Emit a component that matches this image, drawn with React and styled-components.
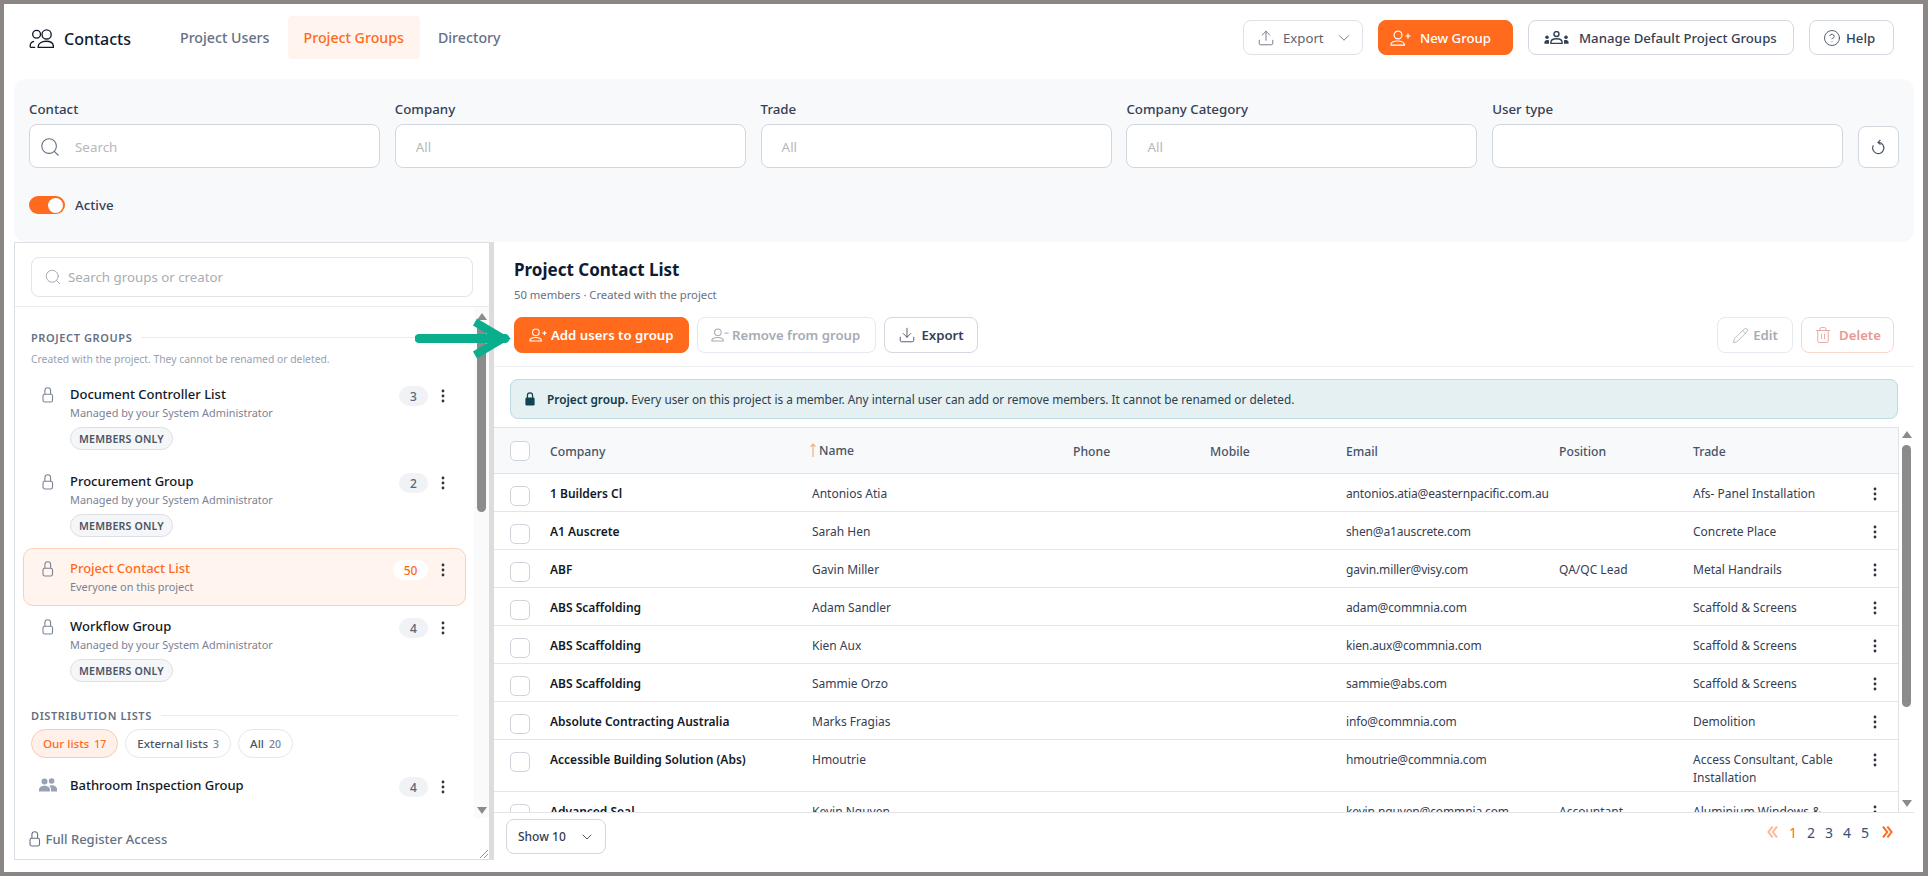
import React from "react";
import styled, { createGlobalStyle } from "styled-components";
import { Search, ChevronDown, Upload, Download, CircleHelp, Pencil, Trash2 } from "lucide-react";

const Global = createGlobalStyle`
  * { box-sizing: border-box; }
  html, body { margin: 0; padding: 0; height: 100%; overflow: hidden; }
  body { font-family: "Noto Sans", "Open Sans", sans-serif; color: #1f2937; background: #fff; }
`;

const ORANGE = "#ff6a1c";

const Frame = styled.div`
  width: 1928px; height: 876px;
  border: solid #8b8684; border-width: 4px 5px 4px 4px;
  background: #fff; display: flex; flex-direction: column; position: relative; overflow: hidden;
`;
const Header = styled.header`
  height: 75px; flex: none; display: flex; align-items: flex-start; padding: 12px 29px 0 25px;
`;
const Brand = styled.div`
  display: flex; align-items: center; gap: 10px; height: 43px; width: 135px;
  font-size: 16px; font-weight: 500; color: #0f1b33; padding-top: 2px;
`;
const Tabs = styled.nav`display: flex; gap: 2px;`;
const Tab = styled.div`
  height: 43px; padding: 0 16px; display: flex; align-items: center; font-size: 14.2px; font-weight: 500; border-radius: 4px;
  color: ${p => (p.$active ? ORANGE : "#667085")};
  background: ${p => (p.$active ? "#fff4ee" : "transparent")};
`;
const HeaderActions = styled.div`margin-left: auto; display: flex; gap: 15px; padding-top: 4px;`;
const Button = styled.button`
  font-family: inherit; height: ${p => p.$h || 35}px; width: ${p => p.$w}px; flex: none;
  padding: 0 0 0 ${p => p.$pad || 0}px;
  display: inline-flex; align-items: center; justify-content: ${p => (p.$pad ? "flex-start" : "center")}; gap: ${p => p.$gap || 7}px;
  font-size: 13.2px; font-weight: ${p => p.$weight || 500}; border-radius: 8px;
  background: ${p => (p.$primary ? ORANGE : "#fff")};
  color: ${p => p.$color || (p.$primary ? "#fff" : "#344054")};
  border: 1px solid ${p => p.$border || (p.$primary ? ORANGE : "#d3d7e0")};
`;
const FilterPanel = styled.section`
  flex: none; height: 163px; margin: 0 9px 0 10px; background: #f8f9fb; border-radius: 12px; padding: 21px 15px 0;
`;
const FilterRow = styled.div`display: flex; gap: 14.8px; align-items: flex-end;`;
const Field = styled.div`width: 351px; flex: none;`;
const FieldLabel = styled.div`font-size: 13.3px; font-weight: 500; color: #344054; line-height: 18px; margin-bottom: 6px;`;
const Input = styled.div`
  height: 44px; background: #fff; border: 1px solid #d2d6de; border-radius: 8px; display: flex; align-items: center;
  padding: 2px 0 0 ${p => (p.$icon ? 9 : 20)}px; gap: 14px; font-size: 13.4px; color: #b5b8be;
`;
const ResetButton = styled.button`
  width: 41px; height: 42px; background: #fff; border: 1px solid #d2d6de; border-radius: 8px; padding: 0;
  display: flex; align-items: center; justify-content: center; color: #475467; flex: none;
`;
const ToggleRow = styled.div`display: flex; align-items: center; gap: 10px; margin-top: 28px; font-size: 13.3px; font-weight: 500; color: #344054;`;
const Toggle = styled.div`
  width: 36px; height: 18px; border-radius: 9px; background: ${ORANGE}; display: flex; justify-content: flex-end; align-items: center; padding-right: 2px;
  &::after { content: ""; width: 15px; height: 15px; background: #fff; border-radius: 50%; }
`;
const Main = styled.main`flex: 1; min-height: 0; display: flex; padding: 0 9px 0 10px;`;

const LeftPanel = styled.aside`
  width: 480px; height: 618px; flex: none; display: flex; flex-direction: column; position: relative;
  border: 1px solid #dcdfe3; border-right: 5px solid #dcdcdc;
`;
const LeftSearchBar = styled.div`flex: none; padding: 14px 16px 9px; border-bottom: 1px solid #e9ebee;`;
const LeftSearch = styled.div`
  height: 40px; border: 1px solid #e0e3e8; border-radius: 8px; display: flex; align-items: center; gap: 6px; padding-left: 12px;
  font-size: 13.3px; color: #a9adb5;
`;
const ListArea = styled.div`flex: 1; min-height: 0; position: relative; overflow: hidden; padding: 22px 0 0 8px;`;
const SectionHead = styled.div`
  display: flex; align-items: center; gap: 9px; padding-left: 8px; width: 435px; height: 16px;
  font-size: 11px; font-weight: 600; letter-spacing: 0.6px; color: #667085; white-space: nowrap;
  &::after { content: ""; flex: 1; height: 1px; background: #e9ebee; }
  margin-top: ${p => p.$top || 0}px;
`;
const SectionNote = styled.div`font-size: 10.35px; line-height: 16px; color: #98a2b3; margin: 6px 0 7px 8px;`;
const Item = styled.div`
  width: 443px; display: flex; align-items: flex-start; padding: 9px 14px 10px 0; border-radius: 10px;
  border: 1px solid ${p => (p.$active ? "#fdd0b5" : "transparent")};
  background: ${p => (p.$active ? "#fff4ee" : "transparent")};
`;
const ItemIcon = styled.div`width: 46px; flex: none; padding: 3px 0 0 ${p => p.$pad || 18}px; color: #7a8394; display: flex;`;
const ItemBody = styled.div`flex: 1; min-width: 0;`;
const ItemTitle = styled.div`font-size: 13px; line-height: 20px; font-weight: 500; color: ${p => (p.$active ? ORANGE : "#111827")};`;
const ItemSub = styled.div`font-size: 10.9px; line-height: 16px; color: #7a8394; margin-top: 1px;`;
const Chip = styled.div`
  display: inline-flex; align-items: center; height: 23px; margin-top: 6px; padding: 0 8px; border-radius: 12px;
  background: #f5f6f8; border: 1px solid #dcdfe5; font-size: 10.6px; font-weight: 600; color: #4b5565; letter-spacing: 0.2px;
`;
const CountBadge = styled.div`
  flex: none; height: 20px; min-width: ${p => (p.$active ? 35 : 29)}px; margin: 2px 7px 0 0; border-radius: 10px; display: flex; align-items: center; justify-content: center;
  font-size: 12px; font-weight: 500;
  background: ${p => (p.$active ? "#fff" : "#f0f2f6")}; color: ${p => (p.$active ? ORANGE : "#56657a")};
`;
const Kebab = styled.div`flex: none; width: 16px; display: flex; justify-content: center; color: #2b3442; padding-top: 5px;`;
const Pills = styled.div`display: flex; gap: 7px; margin: 6px 0 7px 8px;`;
const Pill = styled.div`
  height: 29px; padding: 0 11px; border-radius: 15px; display: flex; align-items: center; gap: 5px; font-size: 11.6px; font-weight: 500;
  border: 1px solid ${p => (p.$active ? "#fdc9ab" : "#e4e7ec")};
  background: ${p => (p.$active ? "#fff1e9" : "#fff")};
  color: ${p => (p.$active ? ORANGE : "#4b5565")};
  span { font-size: 10.5px; color: ${p => (p.$active ? ORANGE : "#7a8394")}; }
`;
const LeftFooter = styled.div`
  flex: none; height: 41px; display: flex; align-items: center; gap: 5px; padding-left: 14px; font-size: 13px; font-weight: 500; color: #667085;
`;
const ResizeGrip = styled.svg`position: absolute; right: 1px; bottom: 1px;`;

const ScrollTrack = styled.div`
  position: absolute; top: 0; bottom: 0; right: ${p => p.$right || 0}px; width: ${p => p.$w}px; background: ${p => p.$bg || "#fafafa"};
`;
const ScrollThumb = styled.div`position: absolute; left: ${p => p.$left}px; width: 9px; border-radius: 5px; background: #8b8b8b;`;
const ScrollArrow = styled.div`
  position: absolute; left: ${p => p.$left}px; width: 0; height: 0;
  border-left: 5px solid transparent; border-right: 5px solid transparent;
  ${p => (p.$down ? "border-top: 7px solid #8b8b8b;" : "border-bottom: 7px solid #8b8b8b;")}
`;

const RightPanel = styled.section`flex: 1; min-width: 0; display: flex; flex-direction: column;`;
const RightHead = styled.div`flex: none; height: 125px; padding: 16px 20px 0; border-bottom: 1px solid #eceef1;`;
const RightTitle = styled.h2`margin: 0; font-size: 17px; line-height: 24px; font-weight: 700; color: #0f1b33;`;
const RightSub = styled.div`font-size: 11.25px; line-height: 16px; color: #667085; margin-top: 5px;`;
const ActionRow = styled.div`display: flex; gap: 8px; margin-top: 14px; align-items: center;`;
const Spacer = styled.div`flex: 1;`;
const Banner = styled.div`
  flex: none; height: 40px; margin: 12px 16px 8px; background: #e4f0f2; border: 1px solid #bddbe0; border-radius: 8px;
  display: flex; align-items: center; gap: 12px; padding-left: 14px; font-size: 11.8px; color: #2c3e50;
  b { color: #0f3a4a; font-weight: 600; }
`;
const TableWrap = styled.div`flex: 1; min-height: 0; position: relative; overflow: hidden;`;
const COLS = "56px 262px 261px 137px 136px 213px 134px 166px 32px 1fr";
const Table = styled.div`width: 1405px; height: 100%; border-right: 1px solid #dfe2e6;`;
const HeadRow = styled.div`
  display: grid; grid-template-columns: ${COLS}; height: 47px; padding-top: 1px; background: #f8f9fb; border-top: 1px solid #dfe2e6; border-bottom: 1px solid #dfe2e6;
  align-items: center; font-size: 12.2px; font-weight: 500; color: #475467;
`;
const Row = styled.div`
  display: grid; grid-template-columns: ${COLS}; border-bottom: 1px solid #e3e5e8; min-height: 38px; padding: 11px 0 4px; align-items: start;
  font-size: 12px; line-height: 18px; color: #344054;
`;
const CheckCell = styled.div`padding-left: 16px;`;
const Checkbox = styled.div`
  width: 20px; height: 20px; border: 1px solid #cfd4dc; border-radius: 5px; background: #fff;
  margin-top: ${p => p.$top || 0}px; margin-bottom: ${p => (p.$top ? -10 : 0)}px;
`;
const CompanyCell = styled.div`font-weight: 600; color: #111827; padding-right: 10px;`;
const TextCell = styled.div`white-space: pre-wrap; min-width: 0;`;
const EmailCell = styled(TextCell)`letter-spacing: -0.14px;`;
const SortName = styled.div`display: flex; align-items: center; gap: 3px; margin: -2px 0 0 -2px;`;
const RowKebab = styled.div`display: flex; justify-content: center; color: #2b3442; padding-top: 2px;`;
const RightFooter = styled.div`
  flex: none; height: 60px; border-top: 1px solid #e3e5e8; display: flex; align-items: flex-start; justify-content: space-between; padding: 6px 21px 0 12px;
`;
const ShowSelect = styled.div`
  width: 100px; height: 35px; border: 1px solid #d3d7e0; border-radius: 8px; display: flex; align-items: center; justify-content: space-between;
  padding: 0 10px 0 11px; font-size: 12px; font-weight: 500; color: #344054;
`;
const Pager = styled.div`display: flex; align-items: center; height: 26px; font-size: 14px; color: #34507a;`;
const PageNum = styled.span`width: 18px; text-align: center; color: ${p => (p.$active ? ORANGE : "#34507a")};`;
const PageGap = styled.div`width: ${p => p.$w}px;`;
const PointerArrow = styled.svg`position: absolute; left: 411px; top: 313px; z-index: 5;`;

const LockIcon = ({ size = 16, color = "currentColor" }) => (
  <svg width={size * 0.72} height={size} viewBox="0 0 11.5 16" fill="none" stroke={color} strokeWidth="1.1">
    <rect x="1" y="7.2" width="9.5" height="7.8" rx="1.8" />
    <path d="M2.9 7.2V3.6a2.85 2.85 0 0 1 5.7 0v3.6" />
  </svg>
);
const SolidLock = () => (
  <svg width="10" height="14" viewBox="0 0 10 14" fill="#0f4452">
    <path d="M2.4 6V3.4a2.6 2.6 0 0 1 5.2 0V6" fill="none" stroke="#0f4452" strokeWidth="1.2" />
    <rect x="0.4" y="5.6" width="9.2" height="8" rx="1.4" />
  </svg>
);
const Dots = () => (
  <svg width="4" height="14" viewBox="0 0 4 14" fill="currentColor">
    <circle cx="2" cy="2" r="1.4" /><circle cx="2" cy="7" r="1.4" /><circle cx="2" cy="12" r="1.4" />
  </svg>
);
const ContactsIcon = () => (
  <svg width="25" height="19" viewBox="0 0 25 19" fill="none" stroke="#111827" strokeWidth="1.35">
    <circle cx="7.6" cy="5.2" r="3.9" /><circle cx="17.6" cy="5.4" r="4.6" />
    <path d="M1.2 18.2v-1.4c0-2.4 1.5-4 3.8-4.4 M1.2 18.3h5" />
    <path d="M9.2 18.3v-.8c0-3 3.4-5.2 8-5.2s7.2 2.2 7.2 5.2v.8z" />
  </svg>
);
const PersonMark = ({ sign, color = "currentColor", w = 21 }) => (
  <svg width={w} height={(w * 16) / 21} viewBox="0 0 21 16" fill="none" stroke={color} strokeWidth="1.2">
    <circle cx="8" cy="5" r="3.9" />
    <path d="M1 15.2v-.6c0-2.2 3-3.6 6.6-3.6s6.8 1.4 6.8 3.6v.6z" />
    {sign === "plus" ? <path d="M15.5 6h5M18 3.5v5" /> : <path d="M15.5 6h5" />}
  </svg>
);
const TeamIcon = ({ color = "#344054" }) => (
  <svg width="25" height="13" viewBox="0 0 25 13" fill={color}>
    <circle cx="12.5" cy="3" r="2.5" fill="none" stroke={color} strokeWidth="1.4" />
    <path d="M6.9 12.4v-1c0-2.3 2.5-3.6 5.6-3.6s5.6 1.3 5.6 3.6v1z" fill="none" stroke={color} strokeWidth="1.4" />
    <circle cx="3" cy="6.2" r="1.8" /><circle cx="22" cy="6.2" r="1.8" />
    <path d="M.4 12.8v-1.4c0-1.4 1.1-2.4 2.6-2.4s2 .4 2 .4v3.4zM24.6 12.8v-1.4c0-1.4-1.1-2.4-2.6-2.4s-2 .4-2 .4v3.4z" />
  </svg>
);
const GroupSolid = () => (
  <svg width="18" height="14" viewBox="0 0 18 14" fill="#98a2b3">
    <circle cx="5.5" cy="3.6" r="3" /><circle cx="12.6" cy="3" r="2.8" />
    <path d="M0 13.4v-1.6c0-2.4 2.4-4 5.5-4s5.5 1.6 5.5 4v1.6zM12 13.4v-2c0-1.6-.8-2.7-1.9-3.6.7-.3 1.6-.5 2.6-.5 2.9 0 5.3 1.6 5.3 3.9v2.2z" />
  </svg>
);
const ResetIcon = () => (
  <svg width="15" height="18" viewBox="0 0 15 18" fill="none" stroke="#475467" strokeWidth="1.2">
    <path d="M7.6 4.4A5.6 5.6 0 1 1 2.4 7.2" />
    <path d="M9.4 1.8L7 4.4l2.6 2" />
  </svg>
);
const SortArrow = () => (
  <svg width="6" height="14" viewBox="0 0 6 14" fill="none" stroke="#f9a56f" strokeWidth="1.1">
    <path d="M3 14V1M.6 3.6L3 1l2.4 2.6" />
  </svg>
);
const DoubleChevron = ({ left, color }) => (
  <svg width="11" height="12" viewBox="0 0 11 12" fill="none" stroke={color} strokeWidth="2">
    {left ? <path d="M5.6 .6L1.4 6l4.2 5.4M10 .6L5.8 6l4.2 5.4" /> : <path d="M1 .6L5.2 6 1 11.4M5.4 .6L9.6 6l-4.2 5.4" />}
  </svg>
);

const Scrollbar = ({ w, bg, right, left, thumbTop, thumbH, upTop, downBottom }) => (
  <ScrollTrack $w={w} $bg={bg} $right={right}>
    <ScrollArrow $left={left} style={{ top: upTop }} />
    <ScrollThumb $left={left} style={{ top: thumbTop, height: thumbH }} />
    <ScrollArrow $left={left} $down style={{ bottom: downBottom }} />
  </ScrollTrack>
);

const ROWS = [
  ["1 Builders Cl", "Antonios Atia", "", "", "antonios.atia@easternpacific.com.au", "", "Afs- Panel Installation"],
  ["A1 Auscrete", "Sarah Hen", "", "", "shen@a1auscrete.com", "", "Concrete Place"],
  ["ABF", "Gavin Miller", "", "", "gavin.miller@visy.com", "QA/QC Lead", "Metal Handrails"],
  ["ABS Scaffolding", "Adam Sandler", "", "", "adam@commnia.com", "", "Scaffold & Screens"],
  ["ABS Scaffolding", "Kien Aux", "", "", "kien.aux@commnia.com", "", "Scaffold & Screens"],
  ["ABS Scaffolding", "Sammie Orzo", "", "", "sammie@abs.com", "", "Scaffold & Screens"],
  ["Absolute Contracting Australia", "Marks Fragias", "", "", "info@commnia.com", "", "Demolition"],
  ["Accessible Building Solution (Abs)", "Hmoutrie", "", "", "hmoutrie@commnia.com", "", "Access Consultant, Cable\nInstallation"],
  ["Advanced Seal", "Kevin Nguyen", "", "", "kevin.nguyen@commnia.com", "Accountant", "Aluminium Windows &\nDoors"],
];

const GroupItem = ({ title, sub, count, chip, active, icon }) => (
  <Item $active={active}>
    <ItemIcon $pad={icon ? 15 : 18}>{icon || <LockIcon />}</ItemIcon>
    <ItemBody>
      <ItemTitle $active={active}>{title}</ItemTitle>
      {sub && <ItemSub>{sub}</ItemSub>}
      {chip && <Chip>MEMBERS ONLY</Chip>}
    </ItemBody>
    <CountBadge $active={active}>{count}</CountBadge>
    <Kebab><Dots /></Kebab>
  </Item>
);

export default function App() {
  return (
    <Frame>
      <Global />
      <Header>
        <Brand><ContactsIcon />Contacts</Brand>
        <Tabs>
          <Tab>Project Users</Tab>
          <Tab $active>Project Groups</Tab>
          <Tab>Directory</Tab>
        </Tabs>
        <HeaderActions>
          <Button $w={120} $border="#dfe2e8" $color="#5b6472" $weight={400} $pad={13} $gap={8}><Upload size={18} strokeWidth={1.1} />Export<ChevronDown size={18} strokeWidth={1.1} style={{ marginLeft: 3 }} /></Button>
          <Button $w={135} $primary $pad={11} $gap={9}><PersonMark sign="plus" />New Group</Button>
          <Button $w={266} $pad={15} $gap={10}><TeamIcon />Manage Default Project Groups</Button>
          <Button $w={85} $pad={13} $gap={5}><CircleHelp size={18} strokeWidth={1.1} />Help</Button>
        </HeaderActions>
      </Header>
      <FilterPanel>
        <FilterRow>
          <Field>
            <FieldLabel>Contact</FieldLabel>
            <Input $icon><Search size={22} strokeWidth={1.2} color="#667085" />Search</Input>
          </Field>
          <Field><FieldLabel>Company</FieldLabel><Input>All</Input></Field>
          <Field><FieldLabel>Trade</FieldLabel><Input>All</Input></Field>
          <Field><FieldLabel>Company Category</FieldLabel><Input>All</Input></Field>
          <Field><FieldLabel>User type</FieldLabel><Input /></Field>
          <ResetButton><ResetIcon /></ResetButton>
        </FilterRow>
        <ToggleRow><Toggle />Active</ToggleRow>
      </FilterPanel>
      <Main>
        <LeftPanel>
          <LeftSearchBar>
            <LeftSearch><Search size={18} strokeWidth={1.2} color="#98a2b3" />Search groups or creator</LeftSearch>
          </LeftSearchBar>
          <ListArea>
            <SectionHead>PROJECT GROUPS</SectionHead>
            <SectionNote>Created with the project. They cannot be renamed or deleted.</SectionNote>
            <GroupItem title="Document Controller List" sub="Managed by your System Administrator" count="3" chip />
            <GroupItem title="Procurement Group" sub="Managed by your System Administrator" count="2" chip />
            <GroupItem title="Project Contact List" sub="Everyone on this project" count="50" active />
            <GroupItem title="Workflow Group" sub="Managed by your System Administrator" count="4" chip />
            <SectionHead $top={14}>DISTRIBUTION LISTS</SectionHead>
            <Pills>
              <Pill $active>Our lists <span>17</span></Pill>
              <Pill>External lists <span>3</span></Pill>
              <Pill>All <span>20</span></Pill>
            </Pills>
            <GroupItem title="Bathroom Inspection Group" count="4" icon={<GroupSolid />} />
            <Scrollbar w={15} left={3} upTop={6} thumbTop={15} thumbH={190} downBottom={4} />
          </ListArea>
          <LeftFooter><LockIcon />Full Register Access</LeftFooter>
          <ResizeGrip width="8" height="8" viewBox="0 0 8 8" stroke="#777" strokeWidth="0.8"><path d="M0 8L8 0M4 8L8 4" /></ResizeGrip>
        </LeftPanel>
        <RightPanel>
          <RightHead>
            <RightTitle>Project Contact List</RightTitle>
            <RightSub>50 members · Created with the project</RightSub>
            <ActionRow>
              <Button $h={36} $w={175} $primary $weight={600} $gap={4} $pad={14}><PersonMark sign="plus" w={18} />Add users to group</Button>
              <Button $h={36} $w={179} $weight={600} $gap={3} $pad={13} $border="#e7e9ee" $color="#a6abb4"><PersonMark sign="minus" w={18} />Remove from group</Button>
              <Button $h={36} $w={94} $weight={600} $gap={5}><Download size={18} strokeWidth={1.1} />Export</Button>
              <Spacer />
              <Button $h={36} $w={76} $weight={600} $gap={4} $border="#e7e9ee" $color="#a6abb4"><Pencil size={17} strokeWidth={1.1} />Edit</Button>
              <Button $h={36} $w={93} $weight={600} $gap={7} $border="#fcd4d0" $color="#e69a94"><Trash2 size={18} strokeWidth={1.1} />Delete</Button>
            </ActionRow>
          </RightHead>
          <Banner>
            <SolidLock />
            <span><b>Project group.</b> Every user on this project is a member. Any internal user can add or remove members. It cannot be renamed or deleted.</span>
          </Banner>
          <TableWrap>
            <Table>
              <HeadRow>
                <CheckCell><Checkbox /></CheckCell>
                <div>Company</div>
                <SortName><SortArrow />Name</SortName>
                <div>Phone</div>
                <div>Mobile</div>
                <div>Email</div>
                <div>Position</div>
                <div>Trade</div>
              </HeadRow>
              {ROWS.map((r, i) => (
                <Row key={i}>
                  <CheckCell><Checkbox $top={1} /></CheckCell>
                  <CompanyCell>{r[0]}</CompanyCell>
                  <TextCell>{r[1]}</TextCell>
                  <TextCell>{r[2]}</TextCell>
                  <TextCell>{r[3]}</TextCell>
                  <EmailCell>{r[4]}</EmailCell>
                  <TextCell>{r[5]}</TextCell>
                  <TextCell>{r[6]}</TextCell>
                  <RowKebab><Dots /></RowKebab>
                </Row>
              ))}
            </Table>
            <Scrollbar w={15} bg="#fff" left={3} upTop={4} thumbTop={18} thumbH={262} downBottom={5} />
          </TableWrap>
          <RightFooter>
            <ShowSelect>Show 10<ChevronDown size={16} strokeWidth={1.3} /></ShowSelect>
            <Pager>
              <DoubleChevron left color="#fbb998" />
              <PageGap $w={6} />
              {[1, 2, 3, 4, 5].map(n => <PageNum key={n} $active={n === 1}>{n}</PageNum>)}
              <PageGap $w={8} />
              <DoubleChevron color={ORANGE} />
            </Pager>
          </RightFooter>
        </RightPanel>
      </Main>
      <PointerArrow width="100" height="44" viewBox="0 0 100 44">
        <path d="M4 21.5H90" stroke="#0aae8c" strokeWidth="9" strokeLinecap="round" fill="none" />
        <path d="M60 5L88 21.5L60 38" stroke="#0aae8c" strokeWidth="8" fill="none" />
      </PointerArrow>
    </Frame>
  );
}
